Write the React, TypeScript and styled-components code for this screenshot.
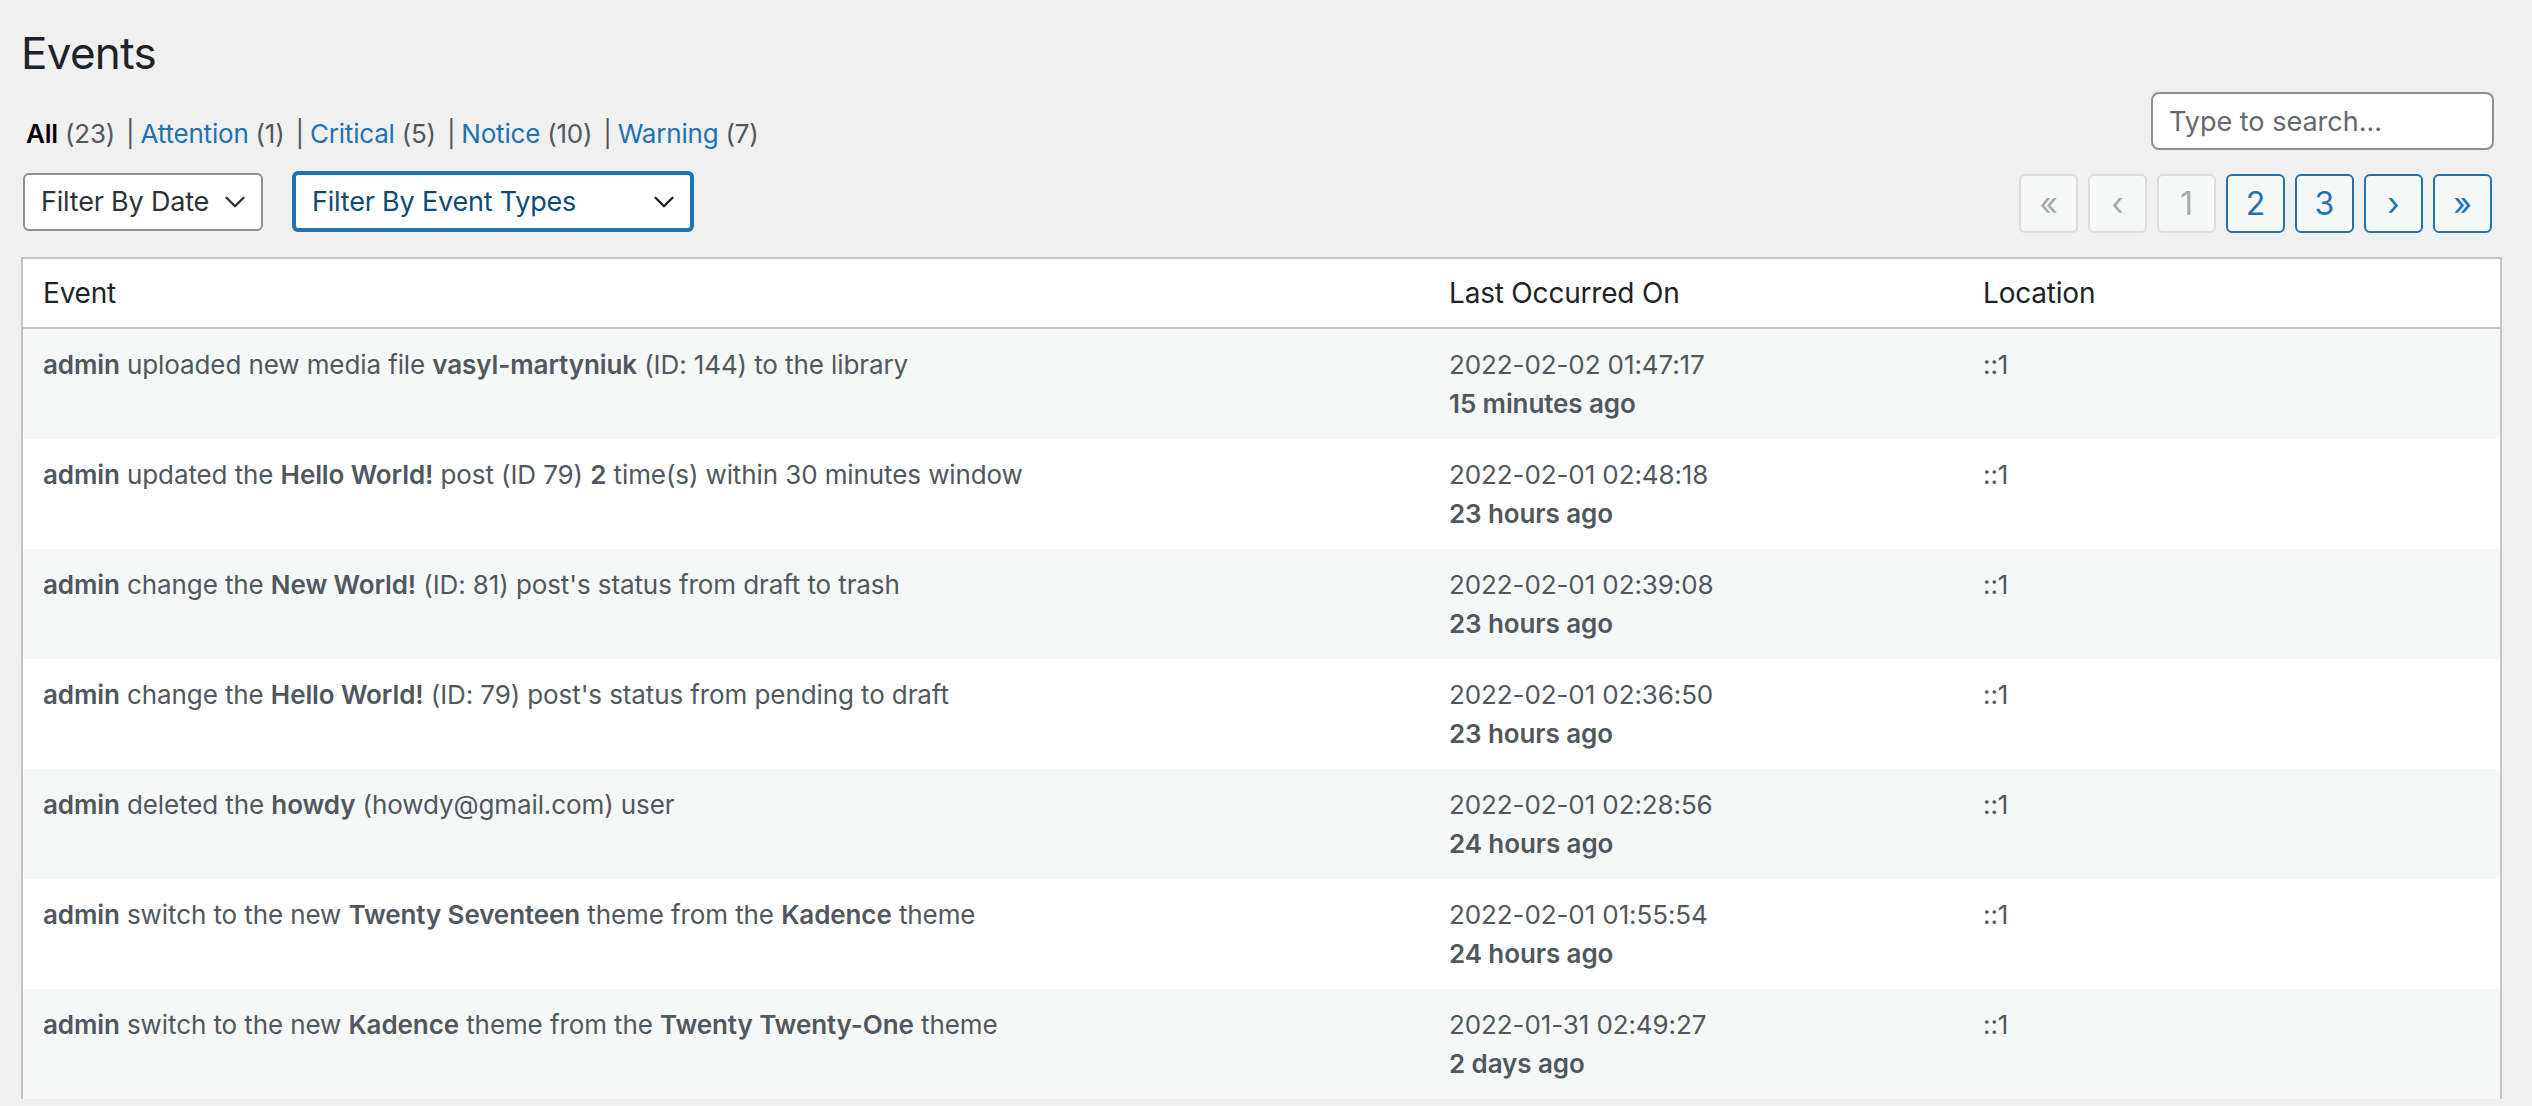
import React from "react";
import styled, { createGlobalStyle } from "styled-components";
import { ChevronDown } from "lucide-react";

const GlobalStyle = createGlobalStyle`
  * {
    box-sizing: border-box;
  }
  html,
  body {
    margin: 0;
    padding: 0;
    height: 1106px;
    overflow: hidden;
    background: #f0f0f1;
  }
  body {
    font-family: Inter, Roboto, "Liberation Sans", sans-serif;
    font-size: 26px;
    color: #3c434a;
  }
`;

const Page = styled.div`
  padding: 23px 30px 0 21px;
`;

const Title = styled.h1`
  margin: 0 0 9px;
  font-size: 44px;
  font-weight: 400;
  line-height: 60px;
  letter-spacing: -0.7px;
  color: #1d2327;
`;

const Toolbar = styled.div<{ $gap?: number }>`
  display: flex;
  justify-content: space-between;
  align-items: flex-start;
  margin-top: ${({ $gap }) => $gap || 0}px;
`;

const Views = styled.ul`
  list-style: none;
  margin: 16px 0 0 5px;
  padding: 0;
  display: flex;
  font-size: 26px;
  line-height: 52px;
  letter-spacing: -0.2px;
  color: #50575e;
`;

const ViewItem = styled.li`
  display: flex;
  align-items: center;
`;

const ViewLink = styled.a<{ $current?: boolean }>`
  color: ${({ $current }) => ($current ? "#000" : "#2271b1")};
  font-weight: ${({ $current }) => ($current ? 600 : 400)};
  text-decoration: none;
`;

const Count = styled.span`
  color: #50575e;
  margin-left: 7px;
`;

const Sep = styled.span`
  color: #50575e;
  margin: 0 6px 0 11px;
`;

const Search = styled.input`
  width: 343px;
  height: 58px;
  margin-right: 8px;
  padding: 0 16px;
  border: 2px solid #8c8f94;
  border-radius: 8px;
  background: #fff;
  font-family: inherit;
  font-size: 27px;
  color: #2c3338;
  outline: none;

  &::placeholder {
    color: #646970;
  }
`;

const Filters = styled.div`
  display: flex;
  align-items: center;
  gap: 29px;
  margin-left: 2px;
`;

const SelectBox = styled.div<{ $width: number; $focused?: boolean }>`
  width: ${({ $width }) => $width}px;
  height: ${({ $focused }) => ($focused ? 61 : 58)}px;
  display: flex;
  align-items: center;
  justify-content: space-between;
  padding: 0 9px 0 16px;
  background: #fff;
  border: ${({ $focused }) => ($focused ? "4px solid #2271b1" : "2px solid #8c8f94")};
  border-radius: 6px;
  font-size: 27px;
  letter-spacing: -0.2px;
  color: ${({ $focused }) => ($focused ? "#0a4b78" : "#2c3338")};
  cursor: pointer;

  svg {
    flex-shrink: 0;
    color: ${({ $focused }) => ($focused ? "#1d2327" : "#2c3338")};
  }
`;

const Pager = styled.div`
  display: flex;
  gap: 10px;
  margin: 3px 10px 0 0;
`;

const PageButton = styled.span<{ $disabled?: boolean }>`
  width: 59px;
  height: 59px;
  display: flex;
  align-items: center;
  justify-content: center;
  background: #f6f7f7;
  border: 2px solid ${({ $disabled }) => ($disabled ? "#dcdcde" : "#2271b1")};
  border-radius: 6px;
  font-size: 32px;
  color: ${({ $disabled }) => ($disabled ? "#a7aaad" : "#2271b1")};
  cursor: ${({ $disabled }) => ($disabled ? "default" : "pointer")};
`;

const Table = styled.table`
  width: 100%;
  margin-top: 24px;
  border: 2px solid #c3c4c7;
  border-bottom: none;
  border-spacing: 0;
  table-layout: fixed;
  background: #fff;
`;

const Th = styled.th<{ $width?: number }>`
  width: ${({ $width }) => ($width ? `${$width}px` : "auto")};
  padding: 16px 20px;
  text-align: left;
  font-size: 28px;
  font-weight: 400;
  line-height: 36px;
  letter-spacing: -0.2px;
  color: #1d2327;
  border-bottom: 2px solid #c3c4c7;
`;

const Tr = styled.tr<{ $striped?: boolean }>`
  background: ${({ $striped }) => ($striped ? "#f6f7f7" : "#fff")};
`;

const Td = styled.td`
  padding: 16px 20px;
  vertical-align: top;
  font-size: 26px;
  line-height: 39px;
  letter-spacing: -0.1px;
  color: #50575e;
`;

const B = styled.b`
  font-weight: 600;
`;

const Ago = styled.div`
  font-weight: 600;
`;

type Row = { event: React.ReactNode; date: string; ago: string; location: string };

const rows: Row[] = [
  {
    event: (
      <>
        <B>admin</B> uploaded new media file <B>vasyl-martyniuk</B> (ID: 144) to the library
      </>
    ),
    date: "2022-02-02 01:47:17",
    ago: "15 minutes ago",
    location: "::1",
  },
  {
    event: (
      <>
        <B>admin</B> updated the <B>Hello World!</B> post (ID 79) <B>2</B> time(s) within 30 minutes window
      </>
    ),
    date: "2022-02-01 02:48:18",
    ago: "23 hours ago",
    location: "::1",
  },
  {
    event: (
      <>
        <B>admin</B> change the <B>New World!</B> (ID: 81) post's status from draft to trash
      </>
    ),
    date: "2022-02-01 02:39:08",
    ago: "23 hours ago",
    location: "::1",
  },
  {
    event: (
      <>
        <B>admin</B> change the <B>Hello World!</B> (ID: 79) post's status from pending to draft
      </>
    ),
    date: "2022-02-01 02:36:50",
    ago: "23 hours ago",
    location: "::1",
  },
  {
    event: (
      <>
        <B>admin</B> deleted the <B>howdy</B> (howdy@gmail.com) user
      </>
    ),
    date: "2022-02-01 02:28:56",
    ago: "24 hours ago",
    location: "::1",
  },
  {
    event: (
      <>
        <B>admin</B> switch to the new <B>Twenty Seventeen</B> theme from the <B>Kadence</B> theme
      </>
    ),
    date: "2022-02-01 01:55:54",
    ago: "24 hours ago",
    location: "::1",
  },
  {
    event: (
      <>
        <B>admin</B> switch to the new <B>Kadence</B> theme from the <B>Twenty Twenty-One</B> theme
      </>
    ),
    date: "2022-01-31 02:49:27",
    ago: "2 days ago",
    location: "::1",
  },
];

const views = [
  { label: "All", count: 23, current: true },
  { label: "Attention", count: 1 },
  { label: "Critical", count: 5 },
  { label: "Notice", count: 10 },
  { label: "Warning", count: 7 },
];

const pages = [
  { label: "«", disabled: true },
  { label: "‹", disabled: true },
  { label: "1", disabled: true },
  { label: "2" },
  { label: "3" },
  { label: "›" },
  { label: "»" },
];

const App = () => {
  return (
    <Page>
      <GlobalStyle />
      <Title>Events</Title>

      <Toolbar>
        <Views>
          {views.map((v, i) => (
            <ViewItem key={v.label}>
              {i > 0 && <Sep>|</Sep>}
              <ViewLink $current={v.current}>{v.label}</ViewLink>
              <Count>({v.count})</Count>
            </ViewItem>
          ))}
        </Views>
        <Search placeholder="Type to search..." />
      </Toolbar>

      <Toolbar $gap={11}>
        <Filters>
          <SelectBox $width={240}>
            Filter By Date
            <ChevronDown size={34} strokeWidth={1.7} />
          </SelectBox>
          <SelectBox $width={402} $focused>
            Filter By Event Types
            <ChevronDown size={34} strokeWidth={1.7} />
          </SelectBox>
        </Filters>
        <Pager>
          {pages.map((p) => (
            <PageButton key={p.label} $disabled={p.disabled}>
              {p.label}
            </PageButton>
          ))}
        </Pager>
      </Toolbar>

      <Table>
        <thead>
          <tr>
            <Th $width={1406}>Event</Th>
            <Th $width={534}>Last Occurred On</Th>
            <Th>Location</Th>
          </tr>
        </thead>
        <tbody>
          {rows.map((r, i) => (
            <Tr key={i} $striped={i % 2 === 0}>
              <Td>{r.event}</Td>
              <Td>
                {r.date}
                <Ago>{r.ago}</Ago>
              </Td>
              <Td>{r.location}</Td>
            </Tr>
          ))}
        </tbody>
      </Table>
    </Page>
  );
};

export default App;
